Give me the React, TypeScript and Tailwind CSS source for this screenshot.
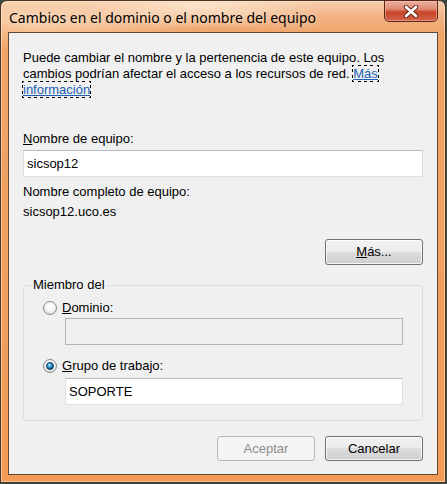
import React from "react";

const body = { fontFamily: '"Liberation Sans", Arial, sans-serif' };

function Radio({ checked }: { checked?: boolean }) {
  return (
    <span
      className="relative inline-block w-[14px] h-[14px] rounded-full border border-[#8a8a8a] shrink-0"
      style={{ background: "radial-gradient(circle at 50% 40%, #ffffff 0%, #f4f4f4 45%, #cfcfcf 100%)" }}
    >
      {checked && (
        <span
          className="absolute left-[2px] top-[2px] w-[8px] h-[8px] rounded-full border border-[#0b3a5c]"
          style={{ background: "radial-gradient(circle at 40% 35%, #b8ecff 0%, #3aa6d8 35%, #0b5a8c 70%, #0a2e4e 100%)" }}
        />
      )}
    </span>
  );
}

function Btn({ children, disabled, h = 25 }: { children: React.ReactNode; disabled?: boolean; h?: number }) {
  return (
    <div
      className={
        "w-[98px] rounded-[3px] border flex items-center justify-center text-[13px] " +
        (h === 26 ? "h-[26px] " : "h-[25px] ") +
        (disabled ? "border-[#b5b8bb] text-[#8d8d8d] bg-[#f4f4f4]" : "border-[#707070] text-black")
      }
      style={
        disabled
          ? undefined
          : {
              background: "linear-gradient(to bottom, #f2f2f2 0%, #ebebeb 49%, #dddddd 50%, #cfcfcf 100%)",
              boxShadow: "inset 0 0 0 1px rgba(255,255,255,0.8)",
            }
      }
    >
      {children}
    </div>
  );
}

export default function App() {
  return (
    <div className="w-[447px] h-[484px] bg-[#3c4a44] overflow-hidden" style={body}>
      <div
        className="relative w-[446px] h-[483px] rounded-t-[7px] border border-[#4a3527] pt-[31px] pl-[7px] pr-[7px] pb-[7px]"
        style={{
          background:
            "radial-gradient(ellipse 120px 22px at 200px 6px, rgba(255,240,220,0.7), rgba(255,240,220,0) 100%), radial-gradient(ellipse 160px 30px at 40px 20px, rgba(255,230,205,0.6), rgba(255,230,205,0) 100%), linear-gradient(to bottom, #f6cfae 0px, #f2b588 14px, #f0a468 32px, #f29a55 100%)",
          boxShadow: "inset 0 0 0 1px rgba(255,230,200,0.6)",
        }}
      >
        <div
          className="absolute left-[8px] top-[7px] text-[14px] leading-[20px] text-black"
          style={{ fontFamily: '"Noto Sans", "Open Sans", sans-serif', textShadow: "0 0 8px rgba(255,240,225,0.9)" }}
        >
          Cambios en el dominio o el nombre del equipo
        </div>
        <div
          className="absolute left-[383px] top-[-1px] w-[54px] h-[22px] rounded-b-[5px] border border-[#5a2418] flex items-center justify-center"
          style={{
            background: "linear-gradient(to bottom, #eab0a0 0%, #e08a72 40%, #c8452a 55%, #d2644a 100%)",
            boxShadow: "inset 0 0 0 1px rgba(255,200,180,0.5)",
          }}
        >
          <svg width="16" height="13" viewBox="0 0 16 13">
            <path d="M3 2 L13 11 M13 2 L3 11" stroke="#6a2a1c" strokeWidth="4.5" strokeLinecap="round" />
            <path d="M3 2 L13 11 M13 2 L3 11" stroke="#ffffff" strokeWidth="2.6" strokeLinecap="round" />
          </svg>
        </div>

        <div className="w-[430px] h-[443px] border border-[#5e4838] bg-[#f0f0f0] pt-[17px] px-[14px] pb-[13px] text-[13px] leading-[16px] text-black">
          <p>
            Puede cambiar el nombre y la pertenencia de este equipo. Los cambios podrían afectar el acceso a los recursos de red.{" "}
            <span className="text-[#1a5fb4] underline" style={{ outline: "1px dotted #000", outlineOffset: "0px" }}>
              Más información
            </span>
          </p>
          <div className="mt-[33px]">
            <span className="underline">N</span>ombre de equipo:
          </div>
          <div className="mt-[3px] h-[27px] bg-white border border-[#dbdfe6] border-t-[#b6bac2] flex items-center pl-[3px]">
            sicsop12
          </div>
          <div className="mt-[7px]">Nombre completo de equipo:</div>
          <div className="mt-[4px]">sicsop12.uco.es</div>
          <div className="mt-[19px] flex justify-end">
            <Btn h={26}>
              <span>
                <span className="underline">M</span>ás...
              </span>
            </Btn>
          </div>
          <fieldset className="mt-[12px] border border-[#d5dfe5] rounded-[3px] pb-[15px] px-0">
            <legend className="ml-[8px] px-[1px]">Miembro del</legend>
            <div className="mt-[7px] pl-[19px] flex items-center gap-[5px]">
              <Radio />
              <span>
                <span className="underline">D</span>ominio:
              </span>
            </div>
            <div className="mt-[2px] ml-[41px] w-[338px] h-[27px] border border-[#b4b4b4] bg-[#f0f0f0]" />
            <div className="mt-[13px] pl-[19px] flex items-center gap-[5px]">
              <Radio checked />
              <span>
                <span className="underline">G</span>rupo de trabajo:
              </span>
            </div>
            <div className="mt-[4px] ml-[41px] w-[338px] h-[27px] bg-white border border-[#dbdfe6] border-t-[#b6bac2] flex items-center pl-[3px]">
              SOPORTE
            </div>
          </fieldset>
          <div className="mt-[15px] flex justify-end gap-[10px]">
            <Btn disabled>Aceptar</Btn>
            <Btn>Cancelar</Btn>
          </div>
        </div>
      </div>
    </div>
  );
}
